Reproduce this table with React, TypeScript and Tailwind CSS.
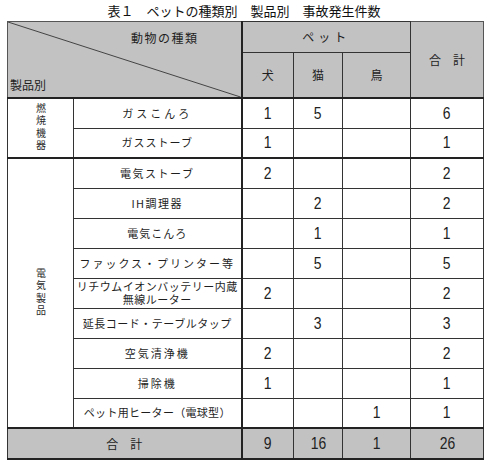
const jp = { fontFamily: '"Noto Sans CJK JP", "Noto Sans", sans-serif' };
const num = { fontFamily: '"Liberation Sans", Arial, sans-serif' };

type Row = { name: string; tr: string; dog?: number; cat?: number; bird?: number; total: number };

const fuel: Row[] = [
  { name: 'ガスこんろ', tr: 'tracking-[3px]', dog: 1, cat: 5, total: 6 },
  { name: 'ガスストーブ', tr: 'tracking-[1px]', dog: 1, total: 1 },
];

const elec: Row[] = [
  { name: '電気ストーブ', tr: 'tracking-[1.5px]', dog: 2, total: 2 },
  { name: 'IH調理器', tr: 'tracking-[1.5px]', cat: 2, total: 2 },
  { name: '電気こんろ', tr: 'tracking-[1px]', cat: 1, total: 1 },
  { name: 'ファックス・プリンター等', tr: 'tracking-[2px]', cat: 5, total: 5 },
  { name: 'リチウムイオンバッテリー内蔵\n無線ルーター', tr: 'tracking-[0.5px]', dog: 2, total: 2 },
  { name: '延長コード・テーブルタップ', tr: 'tracking-[0.5px]', cat: 3, total: 3 },
  { name: '空気清浄機', tr: 'tracking-[2px]', dog: 2, total: 2 },
  { name: '掃除機', tr: 'tracking-[2px]', dog: 1, total: 1 },
  { name: 'ペット用ヒーター（電球型）', tr: 'tracking-[0.3px]', bird: 1, total: 1 },
];

function Vert({ text }: { text: string }) {
  return (
    <div className="flex justify-center">
      <span
        className="[writing-mode:vertical-rl] text-[10px] leading-[12px] tracking-[2.5px] text-[#2a2a2a]"
        style={jp}
      >
        {text}
      </span>
    </div>
  );
}

function NumCell({ v }: { v?: number }) {
  return (
    <td className="border border-[#333] text-center text-[17px] leading-none text-[#222]" style={num}>
      {v !== undefined && <span className="inline-block scale-x-[0.82]">{v}</span>}
    </td>
  );
}

function DataRows({ rows, group, topThick }: { rows: Row[]; group: string; topThick?: boolean }) {
  return (
    <>
      {rows.map((r, i) => (
        <tr key={r.name} className={`h-[30px] ${i === 0 && topThick ? 'border-t-2 border-t-[#222]' : ''}`}>
          {i === 0 && (
            <td rowSpan={rows.length} className="border border-[#333] align-middle">
              <Vert text={group} />
            </td>
          )}
          <td
            className={`border border-r-2 border-[#333] border-r-[#222] text-center text-[11px] leading-[13px] text-[#1e1e1e] whitespace-pre-line ${r.tr}`}
            style={jp}
          >
            {r.name}
          </td>
          <NumCell v={r.dog} />
          <NumCell v={r.cat} />
          <NumCell v={r.bird} />
          <NumCell v={r.total} />
        </tr>
      ))}
    </>
  );
}

export default function App() {
  return (
    <div className="w-[490px] h-[463px] bg-white pl-[7px] pr-[7px]">
      <div className="h-[21px] text-center text-[13px] leading-[21px] font-normal text-[#111] pr-[2px]" style={jp}>
        表１　ペットの種類別　製品別　事故発生件数
      </div>
      <table className="table-fixed border-collapse w-[476px]">
        <colgroup>
          <col className="w-[66px]" />
          <col className="w-[168px]" />
          <col className="w-[52px]" />
          <col className="w-[49px]" />
          <col className="w-[68px]" />
          <col className="w-[73px]" />
        </colgroup>
        <thead className="bg-[#c2c2c2] text-[#1e1e1e]" style={jp}>
          <tr className="h-[30px]">
            <th colSpan={2} rowSpan={2} className="relative border border-[#555] border-r-2 border-r-[#222] p-0 font-normal">
              <svg className="absolute inset-0 w-full h-full" preserveAspectRatio="none" viewBox="0 0 100 100">
                <line x1="0" y1="0" x2="100" y2="100" stroke="#444" strokeWidth="1" vectorEffect="non-scaling-stroke" />
              </svg>
              <div className="relative flex flex-col h-[75px]">
                <div className="h-[32px] flex items-center pl-[123px] text-[12px] tracking-[1.5px]">動物の種類</div>
                <div className="flex-1 flex items-end pl-[2px] pb-[3px] text-[12px]">製品別</div>
              </div>
            </th>
            <th colSpan={3} className="border border-[#333] text-[12px] font-normal tracking-[4px]">ペット</th>
            <th rowSpan={2} className="border border-[#555] border-l-[#333] text-[12px] font-normal">合　計</th>
          </tr>
          <tr className="h-[45px]">
            <th className="border border-[#333] text-[12px] font-normal">犬</th>
            <th className="border border-[#333] text-[12px] font-normal">猫</th>
            <th className="border border-[#333] text-[12px] font-normal">鳥</th>
          </tr>
        </thead>
        <tbody className="border-t-2 border-t-[#222]">
          <DataRows rows={fuel} group="燃焼機器" />
          <DataRows rows={elec} group="電気製品" topThick />
          <tr className="h-[31px] bg-[#c2c2c2] border-t-2 border-t-[#222] border-b-2 border-b-[#222]">
            <td colSpan={2} className="border border-r-2 border-[#333] border-r-[#222] text-center text-[12px] text-[#1e1e1e]" style={jp}>
              合　計
            </td>
            <NumCell v={9} />
            <NumCell v={16} />
            <NumCell v={1} />
            <NumCell v={26} />
          </tr>
        </tbody>
      </table>
    </div>
  );
}
